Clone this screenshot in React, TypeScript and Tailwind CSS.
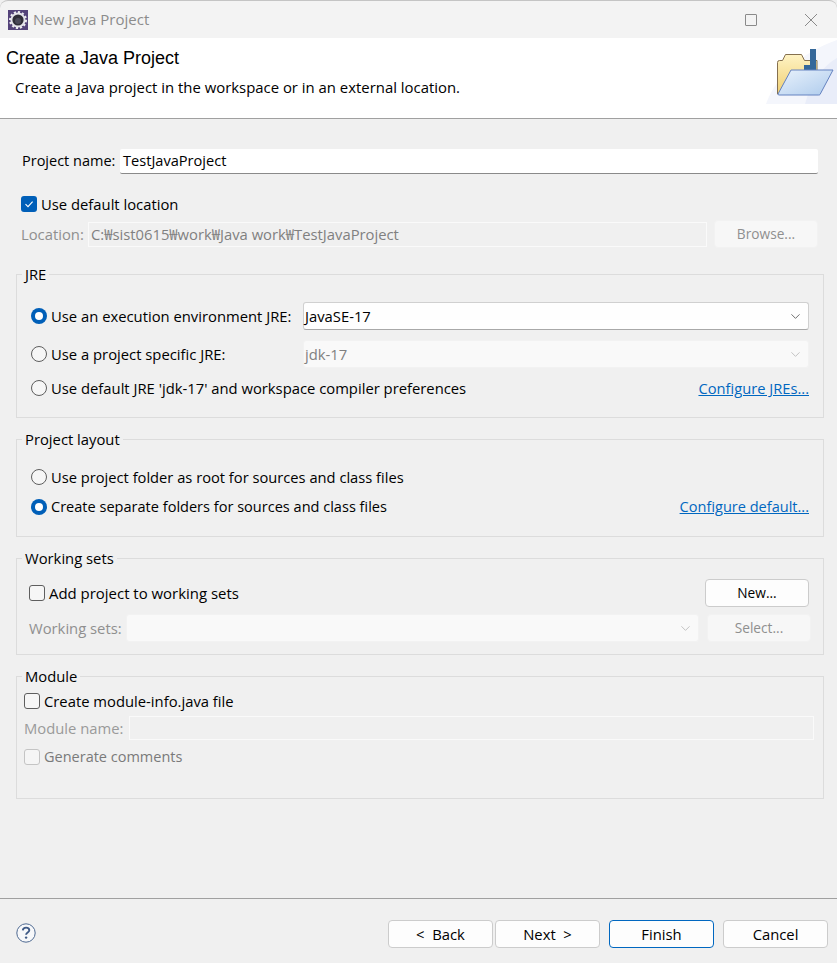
import { ChevronDown } from 'lucide-react'
import type { ReactNode } from 'react'

const font = { fontFamily: '"Open Sans", "Noto Sans CJK KR", sans-serif' }

function EclipseIcon() {
  return (
    <svg width="20" height="20" viewBox="0 0 20 20">
      <rect x="0" y="0" width="20" height="20" fill="#54437a" />
      <circle cx="10" cy="10" r="7.6" fill="#e4e2ea" />
      <circle cx="10" cy="10" r="8" fill="none" stroke="#ececf0" strokeWidth="2" strokeDasharray="2.2 1.95" />
      <circle cx="10" cy="10" r="5.6" fill="#2f2d38" />
      <circle cx="10" cy="11" r="3" fill="#4a4858" />
    </svg>
  )
}

function FolderIcon() {
  return (
    <svg width="72" height="68" viewBox="0 0 72 68">
      <defs>
        <linearGradient id="fold" x1="0" y1="0" x2="1" y2="1">
          <stop offset="0" stopColor="#e9f2fc" />
          <stop offset="1" stopColor="#aecbec" />
        </linearGradient>
        <linearGradient id="back" x1="0" y1="0" x2="0" y2="1">
          <stop offset="0" stopColor="#fff3c4" />
          <stop offset="1" stopColor="#efcf72" />
        </linearGradient>
      </defs>
      <path d="M1 66C10 40 36 14 72 2V66z" fill="#f4f6fc" />
      <path d="M40 66C46 44 58 28 72 20V66z" fill="#e9edf9" />
      <path d="M12.5 56V24.5a2 2 0 0 1 2-2h3l3-6h16l3 6h12.5V34H26L14 56z" fill="url(#back)" stroke="#85704f" strokeWidth="1" />
      <path d="M39 32v-5h6V11h6v21z" fill="#35689a" />
      <path d="M26 32h42L55 56.5a1.5 1.5 0 0 1-1.3.5H14a1 1 0 0 1-1-1z" fill="url(#fold)" stroke="#6482c0" strokeWidth="1" />
    </svg>
  )
}

function HelpIcon() {
  return (
    <svg width="20" height="20" viewBox="0 0 20 20" fill="none">
      <circle cx="10" cy="10" r="9.2" stroke="#4f6a92" strokeWidth="1" fill="#f7f8fa" />
      <path d="M6.8 7.4c.2-1.8 1.5-2.8 3.3-2.8 1.9 0 3.2 1 3.2 2.6 0 2.3-3.2 2.4-3.2 4.6" stroke="#3f5a86" strokeWidth="1.9" />
      <circle cx="10.1" cy="14.6" r="1.2" fill="#3f5a86" />
    </svg>
  )
}

function Check({ checked, disabled }: { checked?: boolean; disabled?: boolean }) {
  if (checked) {
    return (
      <span className="flex h-4 w-4 items-center justify-center rounded-[3px] bg-[#005fb8]">
        <svg width="10" height="10" viewBox="0 0 10 10" fill="none">
          <path d="M1.5 5.2 4 7.6l4.6-5" stroke="#fff" strokeWidth="1.1" />
        </svg>
      </span>
    )
  }
  return (
    <span className={`h-4 w-4 rounded-[3px] border ${disabled ? 'border-[#c4c4c4] bg-[#f5f5f5]' : 'border-[#5e5e5e] bg-[#f6f6f6]'}`} />
  )
}

function Radio({ checked }: { checked?: boolean }) {
  if (checked) {
    return (
      <span className="flex h-4 w-4 items-center justify-center rounded-full bg-[#005fb8]">
        <span className="h-2 w-2 rounded-full bg-white" />
      </span>
    )
  }
  return <span className="h-4 w-4 rounded-full border border-[#5e5e5e] bg-[#f6f6f6]" />
}

function Btn({ label, w, disabled, primary, small }: { label: string; w: string; disabled?: boolean; primary?: boolean; small?: boolean }) {
  let cls = 'border-[#cccccc] bg-[#fdfdfd] text-black'
  if (disabled) cls = 'border-[#f2f2f2] bg-[#f7f7f7] text-[#8f8f8f]'
  if (primary) cls = 'border-[#0067c0] bg-[#fdfdfd] text-black'
  return (
    <div className={`flex h-[28px] shrink-0 items-center justify-center whitespace-pre rounded-[4px] border ${small ? 'text-[13.7px]' : 'text-[14.8px]'} ${w} ${cls}`}>
      {label}
    </div>
  )
}

function Select({ value, disabled, className }: { value?: string; disabled?: boolean; className: string }) {
  return (
    <div className={`flex h-[28px] items-center justify-between rounded-[3px] pl-[1px] pr-[5px] text-[14.8px] ${disabled ? 'border border-[#f2f2f2] bg-[#f9f9f9] text-[#808080]' : 'border border-[#d0d0d0] border-b-[#a8a8a8] bg-[#fefefe] text-black'} ${className}`}>
      <span>{value}</span>
      <ChevronDown size={15} strokeWidth={1.2} color={disabled ? '#b0b0b0' : '#404040'} />
    </div>
  )
}

function Group({ title, h, children }: { title: string; h: string; children: ReactNode }) {
  return (
    <fieldset className={`w-[808px] border border-[#dcdcdc] ${h}`}>
      <legend className="ml-[5px] h-[20px] px-[3px] text-[14.8px] leading-[20px] text-black">{title}</legend>
      {children}
    </fieldset>
  )
}

export default function App() {
  return (
    <div className="flex h-[963px] w-[837px] flex-col overflow-hidden bg-[#f0f0f0] text-[14.8px] text-black" style={font}>
      {/* title bar */}
      <div className="flex h-[38px] shrink-0 items-center rounded-t-[8px] border-t border-[#c4c4c4] bg-[#f3f3f3] pl-[8px]">
        <EclipseIcon />
        <span className="ml-[5px] text-[15px] text-[#8c8c8c]">New Java Project</span>
        <div className="ml-auto mr-[19px] flex items-center gap-[47px]">
          <span className="h-[12px] w-[12px] rounded-[1px] border border-[#8a8a8a]" />
          <svg width="14" height="14" viewBox="0 0 14 14" fill="none">
            <path d="M1 1l12 12M13 1 1 13" stroke="#8a8a8a" strokeWidth="1" />
          </svg>
        </div>
      </div>

      {/* header */}
      <div className="relative h-[81px] shrink-0 border-b border-[#a0a0a0] bg-white">
        <div className="pl-[6px] pt-[8px] font-['Liberation_Sans'] text-[18px] leading-[24px]">Create a Java Project</div>
        <div className="pl-[15px] pt-[7px] text-[14.9px] leading-[20px]">Create a Java project in the workspace or in an external location.</div>
        <div className="absolute right-0 top-0"><FolderIcon /></div>
      </div>

      {/* body */}
      <div className="flex h-[780px] shrink-0 flex-col border-b border-[#a0a0a0] pl-[16px]">
        <div className="ml-[6px] mt-[29px] flex h-[26px] items-center">
          <span className="w-[98px] text-[14.5px]">Project name:</span>
          <div className="flex h-[25px] w-[698px] items-center rounded-[2px] border-b border-[#8a8a8a] bg-white pl-[3px] text-[14.6px]">TestJavaProject</div>
        </div>
        <div className="ml-[5px] mt-[20px] flex h-[20px] items-center gap-[4px]">
          <Check checked />
          <span>Use default location</span>
        </div>
        <div className="ml-[5px] mt-[6px] flex h-[28px] items-center">
          <span className="w-[67px] text-[#8f8f8f]">Location:</span>
          <div className="flex h-[25px] w-[619px] items-center border border-[#fafafa] pl-[2px] text-[#808080]">C:₩sist0615₩work₩Java work₩TestJavaProject</div>
          <div className="ml-[7px]"><Btn label="Browse..." w="w-[104px]" disabled small /></div>
        </div>

        <div className="mt-[16px]">
          <Group title="JRE" h="h-[154px]">
            <div className="ml-[14px] mt-[18px] flex h-[28px] items-center">
              <Radio checked />
              <span className="ml-[4px] w-[252px]">Use an execution environment JRE:</span>
              <Select value="JavaSE-17" className="w-[506px]" />
            </div>
            <div className="ml-[14px] mt-[10px] flex h-[28px] items-center">
              <Radio />
              <span className="ml-[4px] w-[252px]">Use a project specific JRE:</span>
              <Select value="jdk-17" disabled className="w-[506px]" />
            </div>
            <div className="ml-[14px] mt-[6px] flex h-[28px] items-center">
              <Radio />
              <span className="ml-[4px]">Use default JRE 'jdk-17' and workspace compiler preferences</span>
              <span className="ml-auto mr-[14px] text-[14.7px] text-[#0067c0] underline">Configure JREs...</span>
            </div>
          </Group>
        </div>

        <div className="mt-[11px]">
          <Group title="Project layout" h="h-[108px]">
            <div className="ml-[14px] mt-[16px] flex h-[24px] items-center text-[14.7px]">
              <Radio />
              <span className="ml-[4px]">Use project folder as root for sources and class files</span>
            </div>
            <div className="ml-[14px] mt-[6px] flex h-[24px] items-center text-[14.55px]">
              <Radio checked />
              <span className="ml-[4px]">Create separate folders for sources and class files</span>
              <span className="ml-auto mr-[14px] text-[#0067c0] underline">Configure default...</span>
            </div>
          </Group>
        </div>

        <div className="mt-[11px]">
          <Group title="Working sets" h="h-[107px]">
            <div className="ml-[12px] mt-[11px] flex h-[28px] items-center">
              <Check />
              <span className="ml-[4px] text-[14.95px]">Add project to working sets</span>
              <div className="ml-auto mr-[14px]"><Btn label="New..." w="w-[104px]" small /></div>
            </div>
            <div className="ml-[12px] mt-[7px] flex h-[28px] items-center">
              <span className="w-[97px] text-[#8f8f8f]">Working sets:</span>
              <Select disabled className="w-[573px]" />
              <div className="ml-[8px]"><Btn label="Select..." w="w-[104px]" disabled small /></div>
            </div>
          </Group>
        </div>

        <div className="mt-[11px]">
          <Group title="Module" h="h-[133px]">
            <div className="ml-[7px] mt-[3px] flex h-[24px] items-center">
              <Check />
              <span className="ml-[4px]">Create module-info.java file</span>
            </div>
            <div className="ml-[7px] mt-[3px] flex h-[24px] items-center">
              <span className="w-[105px] text-[#9a9a9a]">Module name:</span>
              <div className="h-[24px] w-[685px] border border-[#fafafa]" />
            </div>
            <div className="ml-[7px] mt-[5px] flex h-[24px] items-center">
              <Check disabled />
              <span className="ml-[4px] text-[14.5px] text-[#7a7a7a]">Generate comments</span>
            </div>
          </Group>
        </div>
      </div>

      {/* footer */}
      <div className="flex flex-1 items-start pl-[16px] pr-[9px] pt-[21px]">
        <div className="mt-[3px]"><HelpIcon /></div>
        <div className="ml-auto flex">
          <Btn label="<  Back" w="w-[105px]" />
          <div className="ml-[2px]"><Btn label="Next  >" w="w-[105px]" /></div>
          <div className="ml-[9px]"><Btn label="Finish" w="w-[105px]" primary /></div>
          <div className="ml-[9px]"><Btn label="Cancel" w="w-[105px]" /></div>
        </div>
      </div>
    </div>
  )
}
